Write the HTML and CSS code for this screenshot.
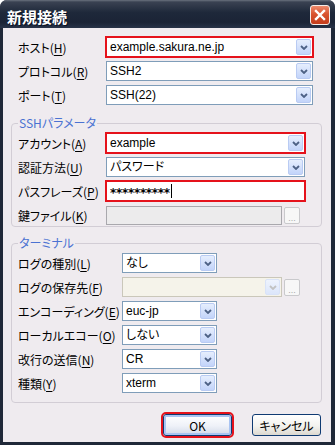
FILE: index.html
```html
<!DOCTYPE html>
<html lang="ja">
<head>
    <meta charset="UTF-8">
    <title>新規接続</title>
    <link rel="stylesheet" href="styles.css">
</head>
<body>
    <div class="window">
        <div class="titlebar">
            <span class="title">新規接続</span>
            <span class="close">
                <svg width="12" height="12" viewBox="0 0 12 12"><path d="M2 2 L10 10 M10 2 L2 10" stroke="#fff" stroke-width="2.4" stroke-linecap="square"/></svg>
            </span>
        </div>

        <div class="client">
            <div class="rows top">
                <div class="row">
                    <label>ホスト(<u>H</u>)</label>
                    <div class="combo combo-host mark"><span class="val">example.sakura.ne.jp</span><span class="arrow"><svg width="8" height="5" viewBox="0 0 8 5"><path d="M1 1 L4 4 L7 1" fill="none" stroke="#4d6185" stroke-width="1.8"/></svg></span></div>
                </div>
                <div class="row">
                    <label>プロトコル(<u>R</u>)</label>
                    <div class="combo combo-host"><span class="val">SSH2</span><span class="arrow"><svg width="8" height="5" viewBox="0 0 8 5"><path d="M1 1 L4 4 L7 1" fill="none" stroke="#4d6185" stroke-width="1.8"/></svg></span></div>
                </div>
                <div class="row">
                    <label>ポート(<u>T</u>)</label>
                    <div class="combo combo-host"><span class="val">SSH(22)</span><span class="arrow"><svg width="8" height="5" viewBox="0 0 8 5"><path d="M1 1 L4 4 L7 1" fill="none" stroke="#4d6185" stroke-width="1.8"/></svg></span></div>
                </div>
            </div>

            <fieldset class="group ssh">
                <legend>SSHパラメータ</legend>
                <div class="rows">
                    <div class="row">
                        <label>アカウント(<u>A</u>)</label>
                        <div class="combo combo-ssh mark"><span class="val">example</span><span class="arrow"><svg width="8" height="5" viewBox="0 0 8 5"><path d="M1 1 L4 4 L7 1" fill="none" stroke="#4d6185" stroke-width="1.8"/></svg></span></div>
                    </div>
                    <div class="row">
                        <label>認証方法(<u>U</u>)</label>
                        <div class="combo combo-ssh"><span class="val">パスワード</span><span class="arrow"><svg width="8" height="5" viewBox="0 0 8 5"><path d="M1 1 L4 4 L7 1" fill="none" stroke="#4d6185" stroke-width="1.8"/></svg></span></div>
                    </div>
                    <div class="row">
                        <label>パスフレーズ(<u>P</u>)</label>
                        <div class="textbox combo-ssh mark"><span class="stars">**********</span><span class="caret"></span></div>
                    </div>
                    <div class="row">
                        <label>鍵ファイル(<u>K</u>)</label>
                        <div class="pick">
                            <div class="textbox disabled key-field"></div>
                            <span class="dots">...</span>
                        </div>
                    </div>
                </div>
            </fieldset>

            <fieldset class="group term">
                <legend>ターミナル</legend>
                <div class="rows">
                    <div class="row">
                        <label>ログの種別(<u>L</u>)</label>
                        <div class="combo combo-term"><span class="val">なし</span><span class="arrow"><svg width="8" height="5" viewBox="0 0 8 5"><path d="M1 1 L4 4 L7 1" fill="none" stroke="#4d6185" stroke-width="1.8"/></svg></span></div>
                    </div>
                    <div class="row">
                        <label>ログの保存先(<u>F</u>)</label>
                        <div class="pick">
                            <div class="combo combo-path disabled"><span class="val"></span><span class="arrow"><svg width="8" height="5" viewBox="0 0 8 5"><path d="M1 1 L4 4 L7 1" fill="none" stroke="#c2c2c2" stroke-width="1.8"/></svg></span></div>
                            <span class="dots">...</span>
                        </div>
                    </div>
                    <div class="row">
                        <label>エンコーディング(<u>E</u>)</label>
                        <div class="combo combo-term"><span class="val">euc-jp</span><span class="arrow"><svg width="8" height="5" viewBox="0 0 8 5"><path d="M1 1 L4 4 L7 1" fill="none" stroke="#4d6185" stroke-width="1.8"/></svg></span></div>
                    </div>
                    <div class="row">
                        <label>ローカルエコー(<u>O</u>)</label>
                        <div class="combo combo-term"><span class="val">しない</span><span class="arrow"><svg width="8" height="5" viewBox="0 0 8 5"><path d="M1 1 L4 4 L7 1" fill="none" stroke="#4d6185" stroke-width="1.8"/></svg></span></div>
                    </div>
                    <div class="row">
                        <label>改行の送信(<u>N</u>)</label>
                        <div class="combo combo-term"><span class="val">CR</span><span class="arrow"><svg width="8" height="5" viewBox="0 0 8 5"><path d="M1 1 L4 4 L7 1" fill="none" stroke="#4d6185" stroke-width="1.8"/></svg></span></div>
                    </div>
                    <div class="row">
                        <label>種類(<u>Y</u>)</label>
                        <div class="combo combo-term"><span class="val">xterm</span><span class="arrow"><svg width="8" height="5" viewBox="0 0 8 5"><path d="M1 1 L4 4 L7 1" fill="none" stroke="#4d6185" stroke-width="1.8"/></svg></span></div>
                    </div>
                </div>
            </fieldset>

            <div class="buttons">
                <button class="btn default mark">OK</button>
                <button class="btn">キャンセル</button>
            </div>
        </div>
    </div>
</body>
</html>
```

FILE: styles.css
```css
body {
    margin: 0;
    background-color: #fff;
    font-family: "Liberation Sans", "Noto Sans CJK JP", sans-serif;
    font-size: 12px;
    font-feature-settings: "palt";
    color: #000;
}
.window {
    width: 335px;
    height: 445px;
    display: flex;
    flex-direction: column;
    border-radius: 7px 7px 0 0;
    overflow: hidden;
    background-color: #1f2838;
}
.titlebar {
    height: 28px;
    flex: none;
    box-sizing: border-box;
    display: flex;
    align-items: center;
    justify-content: space-between;
    padding: 2px 5px 0 7px;
    background: linear-gradient(#6a717e 0, #3a4252 2px, #1e283a 45%, #1b2436 80%, #283348 100%);
}
.title {
    margin-top: 2px;
    color: #fff;
    font-family: "Noto Sans CJK JP", sans-serif;
    font-weight: bold;
    font-size: 15px;
    text-shadow: 1px 1px 0 #0b1224;
}
.close {
    width: 20px;
    height: 20px;
    box-sizing: border-box;
    border: 1px solid #f4ece8;
    border-radius: 3px;
    background: linear-gradient(#ec8a6c, #d9532f 45%, #c43d1c);
    display: flex;
    align-items: center;
    justify-content: center;
}
.client {
    flex: 1;
    margin: 0 4px 3px 3px;
    padding: 9px 9px 6px 8px;
    background-color: #efebef;
    display: flex;
    flex-direction: column;
}
.rows {
    display: flex;
    flex-direction: column;
    gap: 4px;
}
.top {
    padding-left: 7px;
}
.row {
    display: grid;
    grid-template-columns: 88px auto;
    justify-content: start;
    align-items: center;
    height: 20px;
}
.term .row {
    grid-template-columns: 104px auto;
}
label {
    font-family: "Noto Sans CJK JP", sans-serif;
    white-space: nowrap;
}
u {
    text-decoration-thickness: 1px;
    text-underline-offset: 2px;
}
.combo, .textbox {
    box-sizing: border-box;
    height: 20px;
    border: 1px solid #7f9db9;
    background-color: #fff;
    display: flex;
    align-items: stretch;
    padding: 1px;
}
.combo .val {
    flex: 1;
    padding-left: 2px;
    line-height: 16px;
    white-space: nowrap;
    overflow: hidden;
}
.combo .arrow {
    width: 15px;
    box-sizing: border-box;
    border: 1px solid #b9cbf3;
    border-radius: 2px;
    background: linear-gradient(#e6eefd, #c3d4fa);
    display: flex;
    align-items: center;
    justify-content: center;
}
.combo-host { width: 207px; }
.combo-ssh { width: 199px; }
.combo-term { width: 95px; }
.combo-path { width: 160px; }
.key-field { width: 176px; }
.mark {
    outline: 2px solid #e5121b;
    outline-offset: -1px;
}
.combo.disabled {
    background-color: #f5f3ea;
    border-color: #cac7ba;
}
.combo.disabled .arrow {
    border-color: #d9e3f8;
    background: linear-gradient(#eef3fd, #dce6fb);
}
.textbox.disabled {
    height: 19px;
    background-color: #ecebec;
    border-color: #a9a8ad;
}
.textbox {
    align-items: center;
}
.stars {
    padding-left: 2px;
    font-family: "DejaVu Sans", sans-serif;
    font-weight: bold;
    font-size: 12px;
    letter-spacing: -0.3px;
    line-height: 16px;
    padding-top: 3px;
}
.caret {
    width: 1px;
    height: 14px;
    margin-left: 1px;
    background-color: #000;
}
.pick {
    display: flex;
    align-items: center;
    gap: 2px;
}
.dots {
    width: 16px;
    height: 17px;
    box-sizing: border-box;
    border: 1px solid #c9c9cc;
    border-radius: 2px;
    background-color: #f7f7f7;
    color: #a8a8a8;
    font-size: 9px;
    line-height: 20px;
    text-align: center;
}
.group {
    margin: 11px 0 0;
    padding: 3px 8px 1px 6px;
    border: 1px solid #d2cdd5;
    border-radius: 4px;
    min-width: 0;
}
.group.term {
    margin-top: 9px;
    padding-bottom: 9px;
}
legend {
    padding: 0 1px;
    line-height: 14px;
    color: #4b72d2;
    font-family: "Noto Sans CJK JP", sans-serif;
}
.buttons {
    margin-top: 11px;
    display: flex;
    justify-content: flex-end;
    gap: 20px;
    padding-right: 1px;
}
.btn {
    width: 69px;
    height: 22px;
    padding: 0;
    border: 1px solid #0f3a72;
    border-radius: 3px;
    background: linear-gradient(#ffffff, #f3f2ee 55%, #dcd8d0);
    font-family: "Noto Sans CJK JP", sans-serif;
    font-size: 12px;
    font-feature-settings: "palt";
    color: #000;
}
.btn.default {
    box-shadow: inset 0 0 0 2px #a9c4f2;
    background: linear-gradient(#ffffff, #eef1f8 55%, #d2d9e8);
}
.btn.mark {
    outline-offset: 0;
}
```
